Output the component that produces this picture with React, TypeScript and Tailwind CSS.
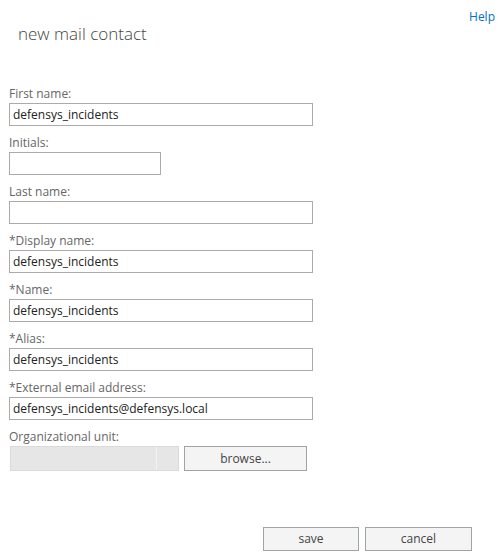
import React from "react";

const fields = [
  { label: "First name:", value: "defensys_incidents", width: "w-[304px]" },
  { label: "Initials:", value: "", width: "w-[152px]" },
  { label: "Last name:", value: "", width: "w-[304px]" },
  { label: "*Display name:", value: "defensys_incidents", width: "w-[304px]" },
  { label: "*Name:", value: "defensys_incidents", width: "w-[304px]" },
  { label: "*Alias:", value: "defensys_incidents", width: "w-[304px]" },
  {
    label: "*External email address:",
    value: "defensys_incidents@defensys.local",
    width: "w-[304px]",
  },
];

const App: React.FC = () => {
  return (
    <div
      className="w-[500px] h-[555px] bg-white relative overflow-hidden"
      style={{ fontFamily: '"Segoe UI", "Open Sans", "Noto Sans", sans-serif' }}
    >
      <a className="absolute right-[5px] top-[8px] text-[12px] text-[#0072c6]">Help</a>

      <h1 className="pl-[18px] pt-[22px] text-[17px] font-light text-[#444] leading-[24px]">
        new mail contact
      </h1>

      <div className="pl-[9px] pt-[39px] flex flex-col">
        {fields.map((f) => (
          <div key={f.label} className="flex flex-col h-[49px]">
            <label className="text-[12px] text-[#666] leading-[16px] h-[17px] pt-[1px]">
              {f.label}
            </label>
            <div
              className={`${f.width} h-[23px] mt-[1px] border border-[#ababab] flex items-center px-[3px] text-[12px] text-[#222]`}
            >
              {f.value}
            </div>
          </div>
        ))}
        <div className="flex flex-col">
          <label className="text-[12px] text-[#666] leading-[16px] h-[17px] pt-[1px]">
            Organizational unit:
          </label>
          <div className="flex items-center mt-[1px] gap-[5px] pl-[1px]">
            <div className="w-[169px] h-[25px] bg-[#e6e6e6] border border-[#dadada] flex">
              <div className="w-[146px] h-full border-r border-[#f2f2f2]" />
            </div>
            <button className="w-[123px] h-[25px] bg-[#f4f4f4] border border-[#9fa5a5] text-[12px] text-[#444]">
              browse...
            </button>
          </div>
        </div>
      </div>

      <div className="absolute left-[263px] top-[527px] flex gap-[6px]">
        <button className="w-[96px] h-[24px] bg-[#f4f4f4] border border-[#9fa5a5] text-[12px] text-[#444]">
          save
        </button>
        <button className="w-[107px] h-[24px] bg-[#f4f4f4] border border-[#9fa5a5] text-[12px] text-[#444]">
          cancel
        </button>
      </div>
    </div>
  );
};

export default App;
